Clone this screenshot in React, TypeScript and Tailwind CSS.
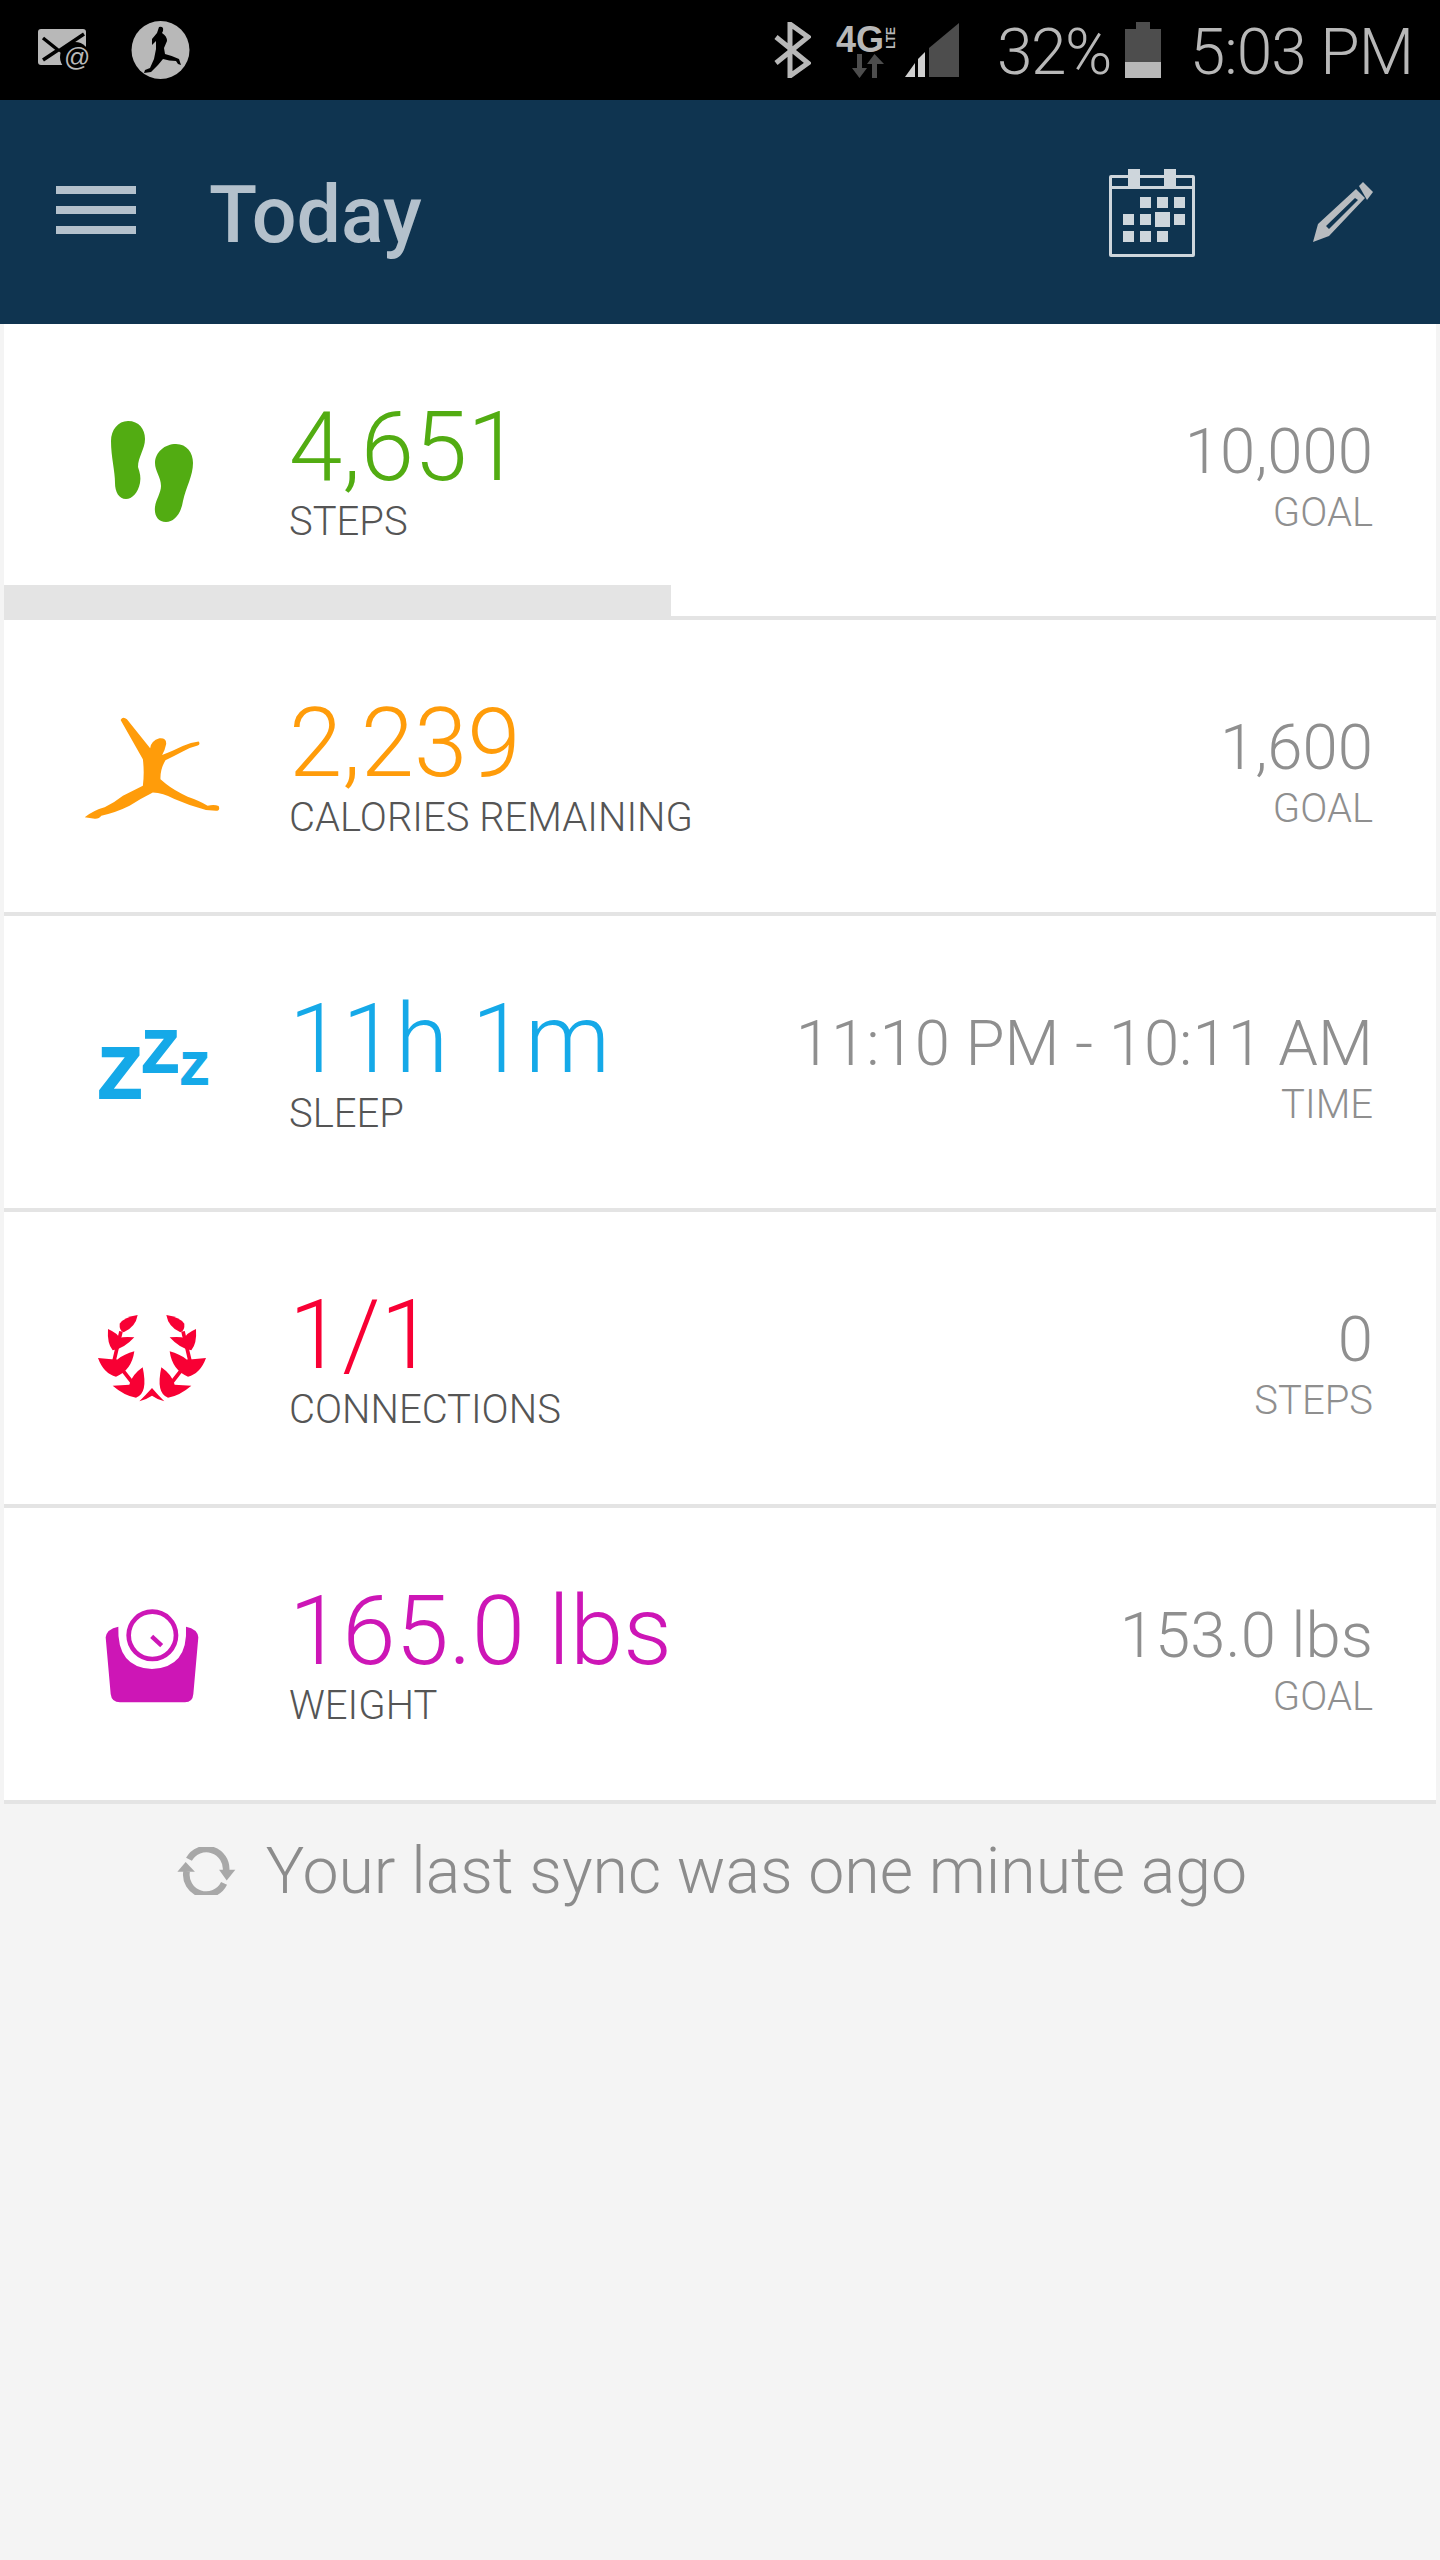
const FONT = "font-['Roboto',sans-serif]";

function MailIcon() {
  return (
    <div className="relative w-[52px] h-[44px] mt-[1px]">
      <svg width="52" height="44" viewBox="0 0 52 44">
        <rect x="0" y="0" width="48" height="36" rx="3" fill="#b8b8b8" />
        <path d="M5 9 L20 21 L5 31 M46 5 L22 21 L30 27" fill="none" stroke="#000" strokeWidth="3.5" />
        <circle cx="37" cy="28" r="15" fill="#000" />
      </svg>
      <span className="absolute left-[26px] top-[14px] text-[26px] leading-[28px] text-[#b8b8b8] font-['Liberation_Sans',sans-serif]">@</span>
    </div>
  );
}

function RunnerIcon() {
  return (
    <svg width="59" height="58" viewBox="0 0 59 58">
      <circle cx="29.5" cy="29" r="29" fill="#b8b8b8" />
      <path
        d="M28 6 Q33 5 32 10 L31 12 Q36 15 36 20 L33 27 L34 33 Q42 35 48 38 L50 44 L47 43 L45 40 Q38 40 32 38 L27 44 L20 51 L13 52 L14 49 L19 47 L23 38 L25 28 L25 20 L21 24 L21 18 L26 12 Z"
        fill="#000"
      />
    </svg>
  );
}

function StatusBar() {
  return (
    <div className={`h-[100px] bg-black flex items-center ${FONT} font-light text-[#b8b8b8]`}>
      <div className="ml-[38px] flex items-center gap-[41px]">
        <MailIcon />
        <RunnerIcon />
      </div>
      <div className="ml-auto flex items-center">
        <svg width="38" height="56" viewBox="0 0 38 56" fill="none" stroke="#b8b8b8" strokeWidth="5">
          <path d="M3 15 L35 41 L17 54 L17 2 L35 15 L3 41" />
        </svg>
        <div className="relative ml-[25px] w-[62px] h-[54px]">
          <span className="absolute left-0 top-[-3px] text-[36px] leading-[40px] font-bold font-['Liberation_Sans',sans-serif]">4G</span>
          <span className="absolute left-[49px] top-[4px] text-[12px] leading-[12px] font-bold [writing-mode:vertical-rl] rotate-180 font-['Liberation_Sans',sans-serif]">LTE</span>
          <svg className="absolute left-[16px] top-[31px]" width="32" height="24" viewBox="0 0 32 24" fill="#4d4d4d">
            <path d="M5 0 H10 V14 H15 L7.5 24 L0 14 H5 Z" />
            <path d="M20 24 H25 V10 H32 L22.5 0 L15 10 H20 Z" />
          </svg>
        </div>
        <svg className="ml-[7px]" width="54" height="54" viewBox="0 0 54 54">
          <path d="M54 0 V54 H24 V25 Z" fill="#4d4d4d" />
          <path d="M20 29 V54 H13 V36 Z" fill="#d0d0d0" />
          <path d="M10 40 V54 H0 Z" fill="#d0d0d0" />
        </svg>
        <span className="ml-[38px] pt-[6px] text-[64px] leading-[70px] tracking-[-1.5px]">32%</span>
        <div className="ml-[14px] w-[36px] h-[56px] flex flex-col items-center">
          <div className="w-[14px] h-[7px] bg-[#4d4d4d]" />
          <div className="w-[36px] h-[33px] bg-[#4d4d4d]" />
          <div className="w-[36px] h-[16px] bg-[#b8b8b8]" />
        </div>
        <span className="ml-[29px] mr-[27px] pt-[6px] text-[64px] leading-[70px] tracking-[-1px]">5:03 PM</span>
      </div>
    </div>
  );
}

function CalendarIcon() {
  const cells = [
    [0, 1, 1, 1],
    [1, 1, 2, 1],
    [1, 1, 1, 0],
  ];
  return (
    <div className="relative w-[86px] h-[88px] mt-[2px]">
      <div className="absolute left-0 top-[6px] w-[86px] h-[82px] border-[3px] border-[#ced6dc] rounded-[2px]" />
      <div className="absolute left-[19px] top-0 w-[12px] h-[17px] bg-[#ced6dc]" />
      <div className="absolute left-[55px] top-0 w-[12px] h-[17px] bg-[#ced6dc]" />
      <div className="absolute left-[3px] top-[17px] w-[80px] h-[3px] bg-[#ced6dc]" />
      <div className="absolute left-[13px] top-[27px] grid grid-cols-4 gap-x-[5px] gap-y-[5px]">
        {cells.flat().map((c, i) => (
          <div key={i} className="w-[12px] h-[12px] flex items-center justify-center">
            {c > 0 && <div className={c === 2 ? 'w-[15px] h-[15px] shrink-0 bg-[#ced6dc]' : 'w-[11px] h-[11px] shrink-0 bg-[#ced6dc]'} />}
          </div>
        ))}
      </div>
    </div>
  );
}

function PencilIcon() {
  return (
    <svg width="60" height="60" viewBox="0 0 60 60">
      <path d="M0 60 L5 42 L43 7 L52 16 L16 54 Z M13 44 L42 16 L45 18 L16 47 Z" fill="#b8bcc0" fillRule="evenodd" />
      <path d="M46 4 L50 0 L60 10 L54 18 Z" fill="#b8bcc0" />
    </svg>
  );
}

function Header() {
  return (
    <div className="h-[224px] bg-[#0f3450] flex items-center">
      <div className="ml-[56px] w-[80px] flex flex-col gap-[12px] mt-[-4px]">
        <div className="h-[8px] bg-[#b4c1cc]" />
        <div className="h-[8px] bg-[#b4c1cc]" />
        <div className="h-[8px] bg-[#b4c1cc]" />
      </div>
      <h1 className={`ml-[73px] pt-[6px] text-[79px] leading-[90px] font-medium text-[#b4c1cc] ${FONT}`}>Today</h1>
      <div className="ml-auto mr-[67px] flex items-center gap-[118px]">
        <CalendarIcon />
        <PencilIcon />
      </div>
    </div>
  );
}

function FeetIcon() {
  return (
    <svg width="82" height="102" viewBox="0 0 82 102" fill="#52ac12">
      <path d="M17 0 C28 0 34 8 34 18 C34 28 27 36 27 46 C29 52 30 56 29 62 C27 72 21 78 15 78 C8 78 4 71 4 62 C4 50 0 36 0 20 C0 9 7 0 17 0 Z" />
      <path d="M65 23 C76 23 82 32 82 42 C82 55 75 66 72 80 C70 93 63 101 55 101 C47 101 43 94 44 86 C45 78 50 72 50 65 C50 56 44 50 44 42 C44 31 54 23 65 23 Z" />
    </svg>
  );
}

function JumperIcon() {
  return (
    <svg width="138" height="103" viewBox="70 78 415 310" fill="#ff9c0a">
      <path d="M183 87 Q190 75 202 85 L272 172 Q274 150 300 142 Q322 140 320 160 Q316 180 308 192 Q340 180 370 165 Q395 155 418 152 Q424 160 415 164 Q390 170 370 182 Q340 198 318 208 Q302 235 303 265 L320 280 Q345 300 385 318 Q420 330 445 345 Q465 340 478 346 Q484 360 470 360 L440 358 Q390 345 345 325 Q310 305 280 305 Q240 325 210 345 Q170 365 125 375 Q118 385 105 384 L75 380 Q100 360 135 350 Q165 335 190 315 L250 285 Q255 245 250 205 Z" />
    </svg>
  );
}

function ZzzIcon() {
  return (
    <div className="w-[108px] h-[68px] flex items-start font-['Liberation_Sans',sans-serif] font-bold text-[#15a9e8] leading-none [-webkit-text-stroke:2px_#15a9e8]">
      <span className="mt-[7px] text-[72px] leading-none">Z</span>
      <span className="mt-[-8px] text-[60px] leading-none">Z</span>
      <span className="ml-[2px] mt-[16px] text-[45px] leading-none">Z</span>
    </div>
  );
}

function LaurelIcon() {
  const half = (
    <>
      <path d="M230 166 Q190 172 176 192 Q174 212 188 218 Q224 202 230 166 Z" />
      <path d="M141 208 Q138 252 155 272 Q188 268 220 233 Q190 230 174 235 Q172 222 141 208 Z" />
      <path d="M111 295 Q128 342 165 351 Q212 332 220 275 Q190 283 168 300 Z" />
      <path d="M155 378 Q190 408 225 414 Q262 402 245 323 Q213 345 205 375 Z" />
      <path d="M180 215 L160 300 L215 370" fill="none" stroke="#f80034" strokeWidth="11" />
    </>
  );
  return (
    <svg className="mt-[-4px]" width="110" height="90" viewBox="108 160 330 270" fill="#f80034">
      {half}
      <g transform="translate(546 0) scale(-1 1)">{half}</g>
      <path d="M235 425 Q255 405 273 385 Q290 405 310 425 Q290 420 273 408 Q255 420 235 425 Z" />
    </svg>
  );
}

function ScaleIcon() {
  return (
    <svg width="94" height="94" viewBox="135 1045 282 282">
      <path d="M175 1098 Q140 1105 137 1130 L152 1300 Q155 1325 180 1325 L375 1325 Q398 1325 400 1300 L415 1130 Q413 1105 378 1098 Q385 1220 276 1225 Q170 1220 175 1098 Z" fill="#cd16b6" />
      <circle cx="277" cy="1124" r="71" fill="none" stroke="#cd16b6" strokeWidth="14" />
      <path d="M275 1127 L305 1155" stroke="#cd16b6" strokeWidth="13" />
    </svg>
  );
}

const ROWS = [
  { icon: <FeetIcon />, value: '4,651', label: 'STEPS', right: '10,000', rightLabel: 'GOAL', color: 'text-[#52ac12]', bar: true },
  { icon: <JumperIcon />, value: '2,239', label: 'CALORIES REMAINING', right: '1,600', rightLabel: 'GOAL', color: 'text-[#ff9c0a]', bar: false },
  { icon: <ZzzIcon />, value: '11h 1m', label: 'SLEEP', right: '11:10 PM - 10:11 AM', rightLabel: 'TIME', color: 'text-[#15a9e8]', bar: false },
  { icon: <LaurelIcon />, value: '1/1', label: 'CONNECTIONS', right: '0', rightLabel: 'STEPS', color: 'text-[#f80034]', bar: false },
  { icon: <ScaleIcon />, value: '165.0 lbs', label: 'WEIGHT', right: '153.0 lbs', rightLabel: 'GOAL', color: 'text-[#cd16b6]', bar: false },
];

function Row({ row }: { row: (typeof ROWS)[number] }) {
  return (
    <div className="relative h-[296px] bg-white border-b-[4px] border-[#e4e4e4] flex items-center">
      <div className="w-[296px] mr-[-11px] shrink-0 pt-[4px] flex items-center justify-center">{row.icon}</div>
      <div className="flex flex-col pb-[2px]">
        <div className={`text-[96px] leading-[105px] font-light ${row.color}`}>{row.value}</div>
        <div className="text-[40px] leading-[44px] font-light text-[#555555]">{row.label}</div>
      </div>
      <div className="ml-auto mr-[63px] pt-[10px] flex flex-col items-end text-[#8f8f8f] font-light">
        <div className="text-[63.5px] leading-[76px]">{row.right}</div>
        <div className="text-[40px] leading-[46px]">{row.rightLabel}</div>
      </div>
      {row.bar && <div className="absolute left-0 bottom-[-4px] w-[667px] h-[35px] bg-[#e4e4e4]" />}
    </div>
  );
}

function SyncIcon() {
  return (
    <svg width="63" height="48" viewBox="30 35 190 145" fill="none" stroke="#a8a8a8" strokeWidth="20">
      <path d="M72 72 A60 60 0 0 1 184 108" />
      <path d="M178 145 A60 60 0 0 1 65 108" />
      <path d="M163 104 H212 L186 136 Z" fill="#a8a8a8" stroke="none" />
      <path d="M37 110 H90 L62 80 Z" fill="#a8a8a8" stroke="none" />
    </svg>
  );
}

export default function App() {
  return (
    <div className={`w-[1440px] h-[2560px] bg-[#f4f4f4] ${FONT}`}>
      <StatusBar />
      <Header />
      <div className="px-[4px]">
        {ROWS.map((r) => (
          <Row key={r.label} row={r} />
        ))}
      </div>
      <div className="mt-[32px] flex items-center justify-center gap-[28px] text-[#8c8c8c] pr-[18px]">
        <SyncIcon />
        <span className="text-[64.4px] leading-[70px] font-light">Your last sync was one minute ago</span>
      </div>
    </div>
  );
}
